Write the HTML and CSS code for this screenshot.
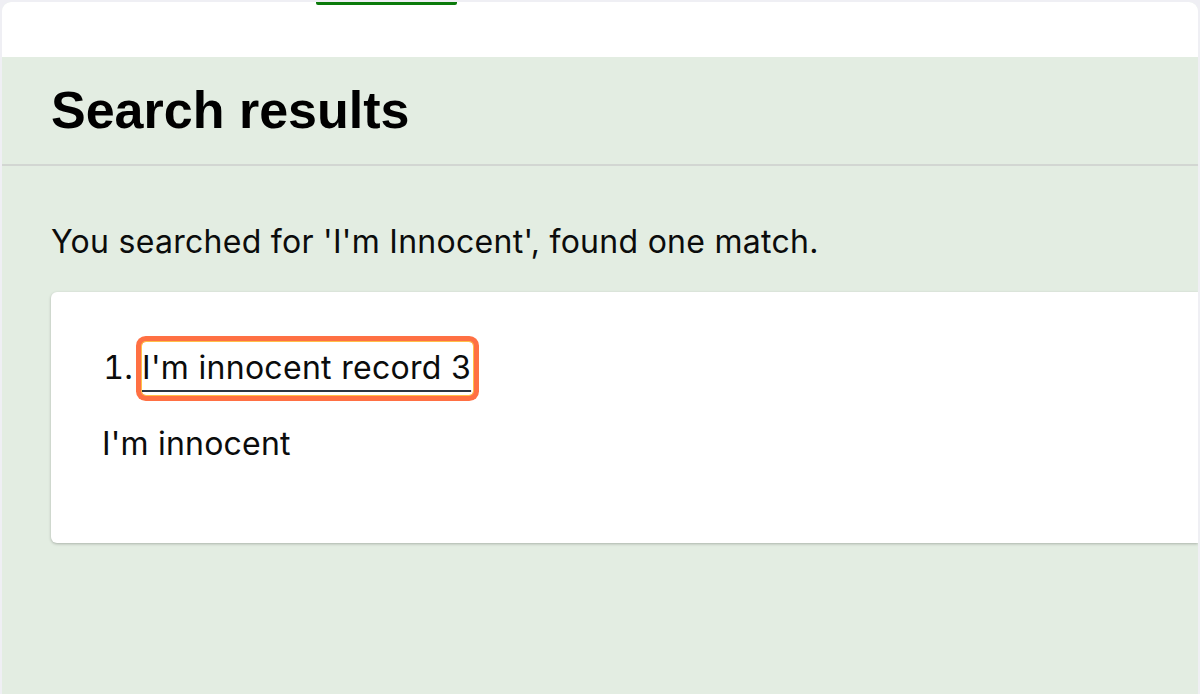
FILE: index.html
```html
<!DOCTYPE html>
<html lang="en">
<head>
<meta charset="utf-8">
<title>Search results</title>
<link rel="stylesheet" href="styles.css">
</head>
<body>
<div class="window">
  <header class="topbar">
    <nav class="tabs">
      <span class="tab-active"></span>
    </nav>
  </header>
  <main class="main">
    <section class="title-band">
      <h1 class="title">Search results</h1>
    </section>
    <section class="content">
      <p class="summary">You searched for 'I'm Innocent', found one match.</p>
      <div class="card">
        <ol class="results">
          <li class="result"><a class="result-link" href="#">I'm innocent record 3</a></li>
        </ol>
        <p class="snippet">I'm innocent</p>
      </div>
    </section>
  </main>
</div>
</body>
</html>
```

FILE: styles.css
```css
html, body {
  margin: 0;
  padding: 0;
}
body {
  background: #efeff4;
  font-family: Inter, "Liberation Sans", sans-serif;
  color: #0b0c0c;
  height: 694px;
  overflow: hidden;
}
.window {
  margin: 2px 2px 0 2px;
  height: 692px;
  border-radius: 9px 9px 0 0;
  background: #e3ede2;
  overflow: hidden;
  display: flex;
  flex-direction: column;
}
.topbar {
  background: #fff;
  height: 55px;
  flex: none;
}
.tabs {
  padding-left: 314px;
}
.tab-active {
  display: block;
  width: 141px;
  height: 3px;
  background: #0b7a0b;
  border-radius: 0 0 2px 2px;
}
.main {
  flex: 1;
  background: #e3ede2;
}
.title-band {
  height: 109px;
  border-bottom: 2px solid #d2d6d2;
  padding: 23px 0 0 49px;
  box-sizing: border-box;
}
.title {
  margin: 0;
  font-family: "Liberation Sans", Arial, sans-serif;
  font-weight: 700;
  font-size: 52px;
  line-height: 60px;
  color: #000;
}
.content {
  padding: 56px 0 0 49px;
}
.summary {
  margin: 0 0 30px 0;
  font-size: 32px;
  line-height: 40px;
  letter-spacing: 0.28px;
}
.card {
  background: #fff;
  border-radius: 6px 0 0 6px;
  box-shadow: 0 1px 3px rgba(0,0,0,0.25);
  height: 251px;
  box-sizing: border-box;
  padding: 50px 0 0 51px;
}
.results {
  margin: 0;
  padding-left: 40px;
  font-size: 32px;
  line-height: 40px;
  letter-spacing: 0.3px;
}
.result::marker {
  color: #0b0c0c;
}
.result-link {
  display: inline-block;
  padding: 6px 2px 7px 0;
  color: #0b0c0c;
  text-decoration: underline;
  text-decoration-color: #2b3440;
  text-underline-offset: 11px;
  text-decoration-thickness: 2px;
  border-radius: 4px;
  box-shadow: 0 0 0 1px #ffbf47, 0 0 0 6px #ff7043;
}
.snippet {
  margin: 29px 0 0 0;
  font-size: 32px;
  line-height: 40px;
  letter-spacing: 0.2px;
}
```
